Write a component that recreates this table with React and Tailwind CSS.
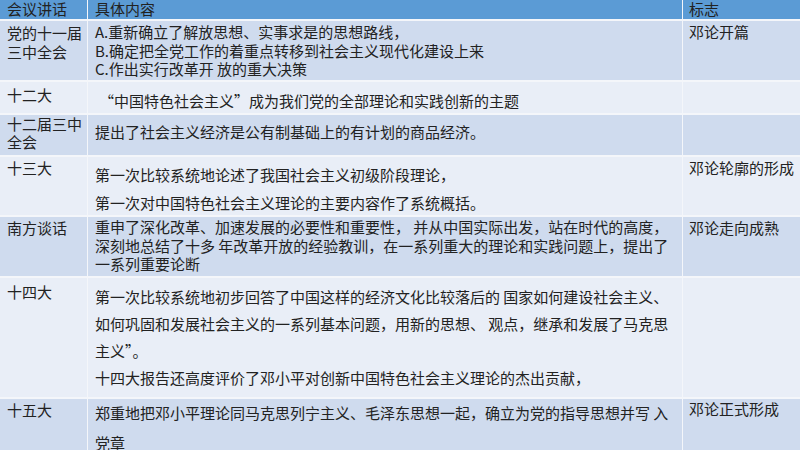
const dark = "bg-[#cfdbee]";
const light = "bg-[#e9eef7]";

function Cell({ className = "", children }) {
  return <div className={"overflow-hidden whitespace-nowrap " + className}>{children}</div>;
}

export default function App() {
  return (
    <div
      className="w-[800px] h-[450px] overflow-hidden bg-[#f4f6fa] text-[#222222] text-[15px]"
      style={{ fontFamily: '"Noto Sans CJK SC", "Noto Sans", sans-serif' }}
    >
      <div className="grid grid-cols-[87px_594px_1fr] grid-rows-[19px_59px_31px_40px_58px_59px_119px_60px] gap-x-px gap-y-[2px]">
        {/* header */}
        <Cell className="bg-[#5b9bd5] pl-[7px] leading-[18px]">会议讲话</Cell>
        <Cell className="bg-[#5b9bd5] pl-[7px] leading-[18px]">具体内容</Cell>
        <Cell className="bg-[#5b9bd5] pl-[6px] leading-[18px]">标志</Cell>

        {/* 党的十一届三中全会 */}
        <Cell className={dark + " pl-[7px] pt-[2px] leading-[19px]"}>
          <div>党的十一届</div>
          <div>三中全会</div>
        </Cell>
        <Cell className={dark + " pl-[7px] pt-[2px] leading-[18.5px]"}>
          <div>A.重新确立了解放思想、实事求是的思想路线，</div>
          <div>B.确定把全党工作的着重点转移到社会主义现代化建设上来</div>
          <div>C.作出实行改革开 放的重大决策</div>
        </Cell>
        <Cell className={dark + " pl-[6px] pt-[2px] leading-[18.5px]"}>邓论开篇</Cell>

        {/* 十二大 */}
        <Cell className={light + " pl-[7px] pt-[3px] leading-[19px]"}>十二大</Cell>
        <Cell className={light + " pl-[11px] pt-[9px] leading-[19px]"}>
          “中国特色社会主义”成为我们党的全部理论和实践创新的主题
        </Cell>
        <Cell className={light} />

        {/* 十二届三中全会 */}
        <Cell className={dark + " pl-[7px] leading-[18px]"}>
          <div>十二届三中</div>
          <div>全会</div>
        </Cell>
        <Cell className={dark + " pl-[7px] pt-[7px] leading-[19px]"}>
          提出了社会主义经济是公有制基础上的有计划的商品经济。
        </Cell>
        <Cell className={dark} />

        {/* 十三大 */}
        <Cell className={light + " pl-[7px] pt-[1px] leading-[19px]"}>十三大</Cell>
        <Cell className={light + " pl-[7px] pt-[8px] leading-[19px] flex flex-col gap-[9px]"}>
          <div>第一次比较系统地论述了我国社会主义初级阶段理论，</div>
          <div>第一次对中国特色社会主义理论的主要内容作了系统概括。</div>
        </Cell>
        <Cell className={light + " pl-[6px] pt-[1px] leading-[19px]"}>邓论轮廓的形成</Cell>

        {/* 南方谈话 */}
        <Cell className={dark + " pl-[7px] pt-[1px] leading-[19px]"}>南方谈话</Cell>
        <Cell className={dark + " pl-[7px] pt-[1px] leading-[18.5px]"}>
          <div>重申了深化改革、加速发展的必要性和重要性， 并从中国实际出发，站在时代的高度，</div>
          <div>深刻地总结了十多 年改革开放的经验教训，在一系列重大的理论和实践问题上，提出了</div>
          <div>一系列重要论断</div>
        </Cell>
        <Cell className={dark + " pl-[6px] pt-[1px] leading-[19px]"}>邓论走向成熟</Cell>

        {/* 十四大 */}
        <Cell className={light + " pl-[7px] pt-[4px] leading-[19px]"}>十四大</Cell>
        <Cell className={light + " pl-[7px] pt-[9px] leading-[19px] flex flex-col gap-[8px]"}>
          <div>第一次比较系统地初步回答了中国这样的经济文化比较落后的 国家如何建设社会主义、</div>
          <div>如何巩固和发展社会主义的一系列基本问题，用新的思想、 观点，继承和发展了马克思</div>
          <div>主义”。</div>
          <div>十四大报告还高度评价了邓小平对创新中国特色社会主义理论的杰出贡献，</div>
        </Cell>
        <Cell className={light} />

        {/* 十五大 */}
        <Cell className={dark + " pl-[7px] pt-[1px] leading-[19px]"}>十五大</Cell>
        <Cell className={dark + " pl-[7px] pt-[4px] leading-[19px] flex flex-col gap-[11px]"}>
          <div>郑重地把邓小平理论同马克思列宁主义、毛泽东思想一起，确立为党的指导思想并写 入</div>
          <div>党章</div>
        </Cell>
        <Cell className={dark + " pl-[6px] leading-[19px]"}>邓论正式形成</Cell>
      </div>
    </div>
  );
}
